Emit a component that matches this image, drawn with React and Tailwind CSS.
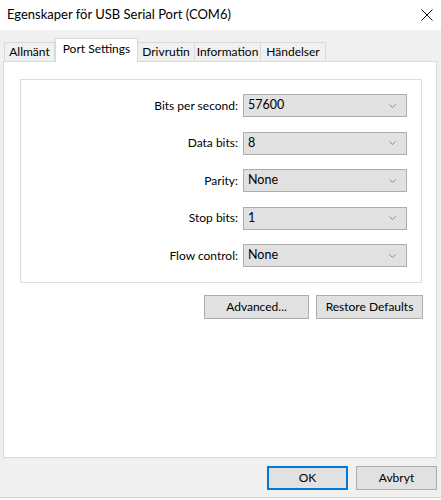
const font = { fontFamily: 'Lato, "Liberation Sans", sans-serif' };

const tabs = [
  { label: "Allmänt", w: "w-[51px]" },
  { label: "Port Settings", w: "w-[83px]", active: true },
  { label: "Drivrutin", w: "w-[58px]" },
  { label: "Information", w: "w-[67px]" },
  { label: "Händelser", w: "w-[66px]" },
];

const fields = [
  { label: "Bits per second:", value: "57600" },
  { label: "Data bits:", value: "8" },
  { label: "Parity:", value: "None" },
  { label: "Stop bits:", value: "1" },
  { label: "Flow control:", value: "None" },
];

const Chevron = () => (
  <svg width="7" height="4" viewBox="0 0 7 4" className="text-[#8a8a8a]">
    <path d="M0.5 0.5 L3.5 3.5 L6.5 0.5" fill="none" stroke="currentColor" strokeWidth="1" />
  </svg>
);

const Select = ({ value }) => (
  <div className="flex h-[23px] w-[164px] items-center justify-between border border-[#adadad] bg-[#e1e1e1] pl-[4px] pr-[10px]">
    <span className="text-[12.5px] text-black">{value}</span>
    <Chevron />
  </div>
);

const Button = ({ children, className = "", primary }) => (
  <div
    className={`flex h-[24px] items-center justify-center bg-[#e1e1e1] text-[12px] text-black ${
      primary ? "border-2 border-[#0078d7]" : "border border-[#adadad]"
    } ${className}`}
  >
    {children}
  </div>
);

export default function App() {
  return (
    <div style={font} className="flex h-[498px] w-[441px] flex-col border-b border-[#cfcfcf] bg-[#f0f0f0]">
      {/* Title bar */}
      <div className="flex h-[30px] items-center justify-between bg-white pl-[7px] pr-[8px]">
        <span className="text-[13px] text-black">Egenskaper för USB Serial Port (COM6)</span>
        <svg width="12" height="12" viewBox="0 0 12 12">
          <path d="M0.5 0.5 L11.5 11.5 M11.5 0.5 L0.5 11.5" stroke="#111" strokeWidth="1" />
        </svg>
      </div>

      {/* Tabs */}
      <div className="relative z-10 ml-[4px] mt-[8px] flex h-[23px] items-end">
        {tabs.map((t) => (
          <div
            key={t.label}
            className={`flex ${t.w} items-center justify-center whitespace-nowrap border border-b-0 border-[#d9d9d9] text-[12px] text-black ${
              t.active ? "-mb-px h-[24px] bg-white pb-[3px]" : "-ml-px h-[19px] bg-[#f0f0f0] first:ml-0"
            }`}
          >
            {t.label}
          </div>
        ))}
      </div>

      {/* Panel */}
      <div className="ml-[3px] h-[397px] w-[434px] border border-[#d9d9d9] bg-white pl-[16px] pt-[17px]">
        <div className="flex w-[402px] flex-col gap-[14.5px] border border-[#dcdcdc] pb-[15px] pr-[14px] pt-[14px]">
          {fields.map((f) => (
            <div key={f.label} className="flex items-center justify-end gap-[5px]">
              <span className="text-[12px] text-black">{f.label}</span>
              <Select value={f.value} />
            </div>
          ))}
        </div>
        <div className="mt-[12px] flex w-[403px] justify-end gap-[7px]">
          <Button className="w-[105px]">Advanced...</Button>
          <Button className="w-[107px]">Restore Defaults</Button>
        </div>
      </div>

      {/* Footer */}
      <div className="mt-[8px] flex justify-end gap-[8px] pr-[4px]">
        <Button primary className="w-[81px]">OK</Button>
        <Button className="w-[81px]">Avbryt</Button>
      </div>
    </div>
  );
}
